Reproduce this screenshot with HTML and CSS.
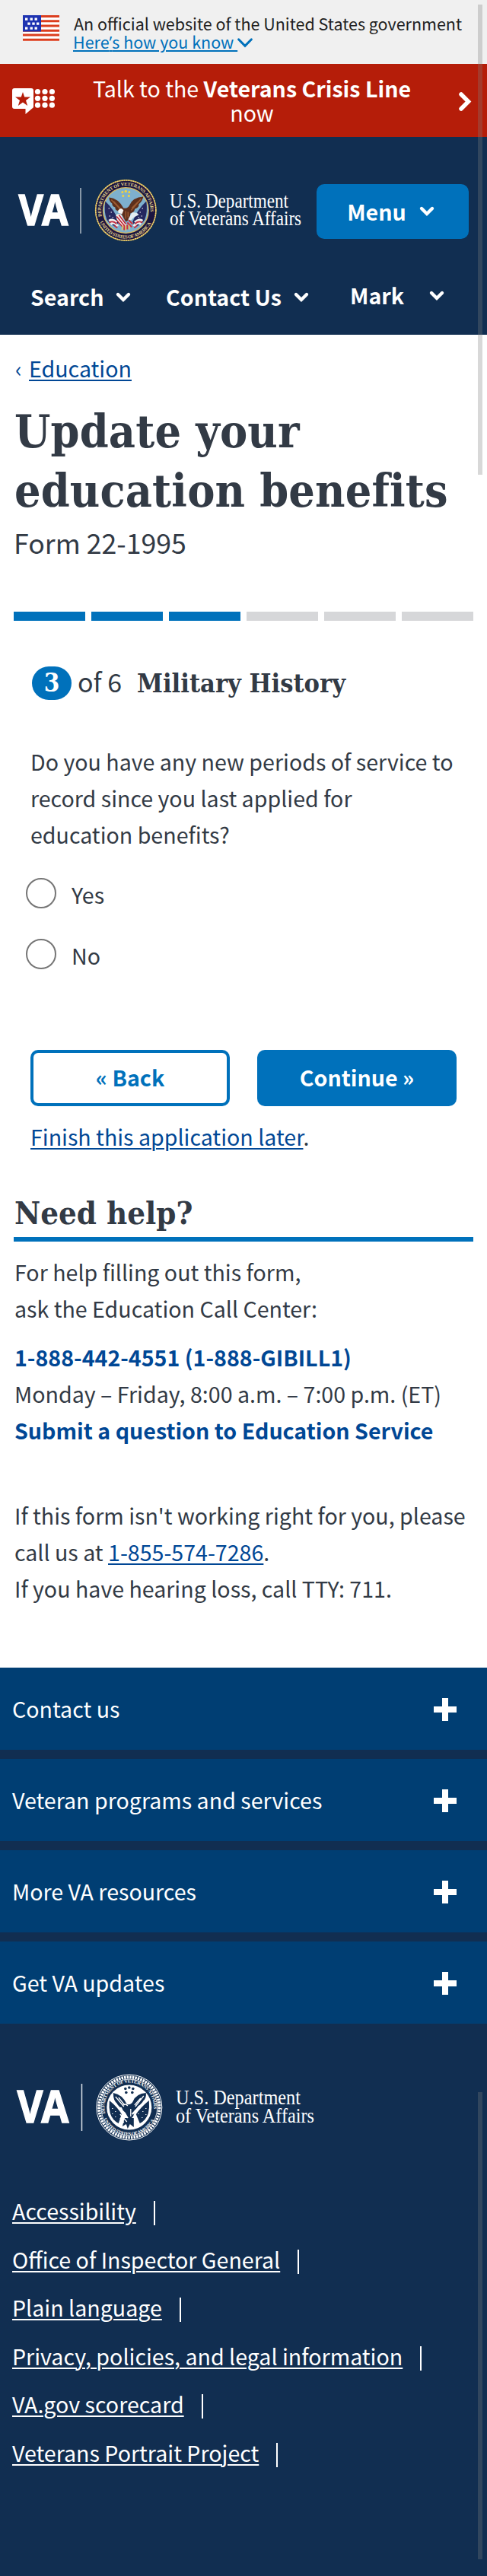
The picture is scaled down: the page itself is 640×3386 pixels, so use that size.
FILE: index.html
```
<!DOCTYPE html>
<html lang="en">
<head>
<meta charset="utf-8">
<title>Update your education benefits | VA.gov</title>
<link rel="stylesheet" href="styles.css">
</head>
<body>
<div class="gov-banner">
  <svg class="flag" viewBox="0 0 48 34" width="48" height="34">
    <rect width="48" height="34" fill="#fff"/>
    <path d="M0 1.5H48M0 7.7H48M0 14H48M0 20.2H48M0 26H48M0 32.3H48" stroke="#db3e1f" stroke-width="3"/>
    <rect width="24" height="21.5" fill="#1e33b1"/>
    <path d="M3 5.2h3.4M9.500 5.2h3.4M15.500 5.2h3.4M6.300 11.2h3.4M12.300 11.2h3.4M18 11.2h3.4M3 17.2h3.4M9.500 17.2h3.4M15.500 17.2h3.4" stroke="#fff" stroke-width="3.2"/>
  </svg>
  <div class="gov-text">
    <div class="gov-line">An official website of the United States government</div>
    <a class="gov-link">Here<span class="apos">’</span>s how you know </a><svg class="gov-chevron" viewBox="0 0 20 13" width="20" height="13"><path d="M1.6 1.8 10 10.4l8.400-8.600" fill="none" stroke="#0071bb" stroke-width="3" stroke-linecap="round"/></svg>
  </div>
</div>
<div class="crisis">
  <svg class="crisis-icon" viewBox="0 0 56 36" width="56" height="36">
    <path d="M3 0H25a3 3 0 0 1 3 3V24a3 3 0 0 1-2 2.700L17.500 34V27H3a3 3 0 0 1-3-3V3a3 3 0 0 1 3-3z" fill="#fff"/>
    <path d="M14 5l2.200 6.400H24l-6 4.500 2.200 7-6.200-4.300-6.200 4.300 2.200-7-6-4.500h7.800z" fill="#b51d09"/>
    <g fill="#fff"><circle cx="33.500" cy="4.500" r="3.600"/><circle cx="43" cy="4.500" r="3.600"/><circle cx="52.400" cy="4.500" r="3.600"/><circle cx="33.500" cy="13.300" r="3.600"/><circle cx="43" cy="13.300" r="3.600"/><circle cx="52.400" cy="13.300" r="3.600"/><circle cx="33.500" cy="22.200" r="3.600"/><circle cx="43" cy="22.200" r="3.600"/><circle cx="52.400" cy="22.200" r="3.600"/></g>
  </svg>
  <div class="crisis-text">Talk to the <b>Veterans Crisis Line</b><br>now</div>
  <svg class="crisis-arrow" viewBox="0 0 18 27" width="18" height="27"><path d="M4 4l9.500 9.500L4 23" fill="none" stroke="#fff" stroke-width="5.500" stroke-linecap="round"/></svg>
</div>
<header class="header">
  <div class="brand-row">
    <svg class="logo" viewBox="0 227 404 100" width="404" height="100">
      <defs>
        <path id="arcTop" d="M-31.500 8A32.500 32.500 0 1 1 31.500 8"/>
        <path id="arcBottom" d="M-35 12.500A37.200 37.200 0 0 0 35 12.500"/>
        <path id="flagpanel" d="M-27-12Q-15-1-9 15L-12 22Q-22 18-25 12Q-29 2-27-12z"/>
      </defs>
      <text class="va" x="24.500" y="295.700" textLength="65" lengthAdjust="spacingAndGlyphs">VA</text>
      <path d="M106 247V307" stroke="#8797a8" stroke-width="2"/>
      <g transform="translate(165.300 276.500)">
        <circle r="40.500" fill="#b89a4b"/>
        <circle r="39" fill="#1b1540"/>
        <circle r="39.500" fill="none" stroke="#f0d676" stroke-width="1.500" stroke-dasharray="2 1"/>
        <circle r="29.800" fill="#7eb0ce" stroke="#d9bc62" stroke-width="1.300"/>
        <text class="seal-text gold"><textPath href="#arcTop" textLength="112">DEPARTMENT OF VETERANS AFFAIRS</textPath></text>
        <text class="seal-text gold"><textPath href="#arcBottom" startOffset="3" textLength="83">UNITED STATES OF AMERICA</textPath></text>
        <g fill="#f2d33f"><circle cx="0" cy="-25" r="1.700"/><circle cx="-4.500" cy="-24" r="1.500"/><circle cx="4.500" cy="-24" r="1.500"/><circle cx="-3.500" cy="-19" r="1.500"/><circle cx="4" cy="-19" r="1.500"/></g>
        <use href="#flagpanel" fill="#25285f"/>
        <use href="#flagpanel" fill="#25285f" transform="scale(-1 1)"/>
        <path d="M-22-3v1M-19 2v1M-21 7v1M-17 9v1M22-3v1M19 2v1M21 7v1M17 9v1" stroke="#fff" stroke-width="1.500"/>
        <path d="M-22 14q5-3 10 2M-20 18q6-4 9 3M22 14q-5-3-10 2M20 18q-6-4-9 3" fill="none" stroke="#eee" stroke-width="3.500"/>
        <path d="M-22 16q6-3 10 2M22 16q-6-3-10 2M-15 20l4 3M15 20l-4 3" fill="none" stroke="#c32d40" stroke-width="1.800"/>
        <path d="M-22-17Q-10-16-3-3Q3-2 5-7Q9-17 23-18Q22-12 17-8Q18-4 12-2Q11 3 6 4Q6 13 0 15L-5 6Q-7 5-8 1Q-14 1-14-4Q-18-5-18-9Q-22-12-22-17z" fill="#5d2f1c"/>
        <path d="M-19-14L-6 0M-16-12L-7-2M20-15L7 0M16-11L8-3M0 1v10M3 2v7" stroke="#9a5a31" stroke-width="1.500"/>
        <path d="M-10 0q4-5 7 0l-2 5-5-2z" fill="#f5f5f2"/>
        <path d="M-13 6Q-6 2-4 10L1 19L-3 23Q-12 17-13 6z" fill="#f3eee8"/>
        <path d="M-12 8L-2 20M-9 6L0 18M-12 13L-4 22" stroke="#bd2035" stroke-width="1.500"/>
        <path d="M8 3Q15 2 17 6Q11 8 7 13L3 12z" fill="#e4edf1"/>
        <path d="M4 13l5 5M2 16l6 6M-2 19v7M2 19v6" stroke="#cc3040" stroke-width="2"/>
        <path d="M-4 20l-1 6M0 20v7M4 19l1 6" stroke="#e9c857" stroke-width="1.500"/>
      </g>
      <text class="dept" x="223" y="272.500" textLength="156" lengthAdjust="spacingAndGlyphs">U.S. Department</text>
      <text class="dept" x="223" y="296" textLength="173" lengthAdjust="spacingAndGlyphs">of Veterans Affairs</text>
    </svg>
    <button class="menu-btn">Menu <svg viewBox="0 0 20 13" width="20" height="13"><path d="M3 3l7 7 7-7" class="chev"/></svg></button>
  </div>
  <nav class="nav">
    <div class="nav-item">Search<svg viewBox="0 0 20 13" width="20" height="13"><path d="M3 3l7 7 7-7" class="chev"/></svg></div>
    <div class="nav-item">Contact Us<svg viewBox="0 0 20 13" width="20" height="13"><path d="M3 3l7 7 7-7" class="chev"/></svg></div>
    <div class="nav-item nav-user">Mark<svg viewBox="0 0 20 13" width="20" height="13"><path d="M3 3l7 7 7-7" class="chev"/></svg></div>
  </nav>
</header>
<main class="main">
  <div class="crumb"><span class="crumb-arrow">‹</span><a class="link">Education</a></div>
  <h1>Update your<br>education benefits</h1>
  <div class="form-no">Form 22-1995</div>
  <div class="progress"><i class="done"></i><i class="done"></i><i class="done"></i><i></i><i></i><i></i></div>
  <section class="form">
    <div class="step"><span class="step-num">3</span><span class="step-of">of 6</span><span class="step-title">Military History</span></div>
    <p class="question">Do you have any new periods of service to<br>record since you last applied for<br>education benefits?</p>
    <label class="option"><span class="radio"></span>Yes</label>
    <label class="option"><span class="radio"></span>No</label>
    <div class="buttons"><button class="btn btn-back">« Back</button><button class="btn btn-next">Continue »</button></div>
    <p class="later"><a class="link">Finish this application later</a>.</p>
  </section>
  <h2>Need help?</h2>
  <div class="help">
    <p>For help filling out this form,<br>ask the Education Call Center:</p>
    <p class="help-contact"><b>1-888-442-4551 (1-888-GIBILL1)</b><br>Monday – Friday, 8:00 a.m. – 7:00 p.m. (ET)<br><b>Submit a question to Education Service</b></p>
    <p class="help-tech">If this form isn't working right for you, please<br>call us at <a class="link">1-855-574-7286</a>.<br>If you have hearing loss, call TTY: 711.</p>
  </div>
</main>
<footer class="footer">
  <div class="accordion">
    <div class="acc-item">Contact us<svg viewBox="0 0 30 30" width="30" height="30"><path d="M15 0V30M0 15H30" class="plus"/></svg></div>
    <div class="acc-item">Veteran programs and services<svg viewBox="0 0 30 30" width="30" height="30"><path d="M15 0V30M0 15H30" class="plus"/></svg></div>
    <div class="acc-item">More VA resources<svg viewBox="0 0 30 30" width="30" height="30"><path d="M15 0V30M0 15H30" class="plus"/></svg></div>
    <div class="acc-item">Get VA updates<svg viewBox="0 0 30 30" width="30" height="30"><path d="M15 0V30M0 15H30" class="plus"/></svg></div>
  </div>
  <svg class="footer-logo" viewBox="0 2720 440 100" width="440" height="100">
    <text class="va va-lg" x="22.500" y="2790" textLength="68" lengthAdjust="spacingAndGlyphs">VA</text>
    <path d="M107.500 2739V2801" stroke="#dfe4ea" stroke-width="1.500"/>
    <g transform="translate(169.800 2770)">
      <circle r="43" fill="#112e51" stroke="#fff" stroke-width="1"/>
      <circle r="39.700" fill="none" stroke="#fff" stroke-width="3.800" stroke-dasharray="2.500 1.100"/>
      <circle r="37" fill="none" stroke="#fff" stroke-width=".8"/>
      <circle r="29.500" fill="#fff"/>
      <text class="seal-text light"><textPath href="#arcTop" textLength="112">DEPARTMENT OF VETERANS AFFAIRS</textPath></text>
      <text class="seal-text light"><textPath href="#arcBottom" startOffset="3" textLength="83">UNITED STATES OF AMERICA</textPath></text>
      <g fill="#112e51">
        <circle cx="0" cy="-26" r="1.800"/><circle cx="-5" cy="-24.500" r="1.800"/><circle cx="5" cy="-24.500" r="1.800"/><circle cx="-4" cy="-19.500" r="1.800"/><circle cx="4" cy="-19.500" r="1.800"/>
        <path d="M-21-19Q-9-17-3-4Q3-3 5-8Q9-18 22-19Q23-12 18-8Q18-4 12-2Q10 2 7 4Q7 13 0 16L-5 7Q-9 4-10 0Q-16 0-16-5Q-21-9-21-19z"/>
        <path d="M-26-9Q-15 0-10 9L-14 21Q-22 17-25 8Q-27 0-26-9z"/>
        <path d="M26-9Q15 0 9 9L14 21Q22 17 25 8Q27 0 26-9z"/>
        <path d="M-6 14L-9 25L-4 22L-2 28L1 22L6 26L6 14z"/>
      </g>
      <path d="M-18-14L-7-1M-14-13L-6-3M19-15L8-1M15-12L7-3M-9-2q4-4 7 0M-22 1v1M-18 5v1M-22 8v1M-18 12v1M22 1v1M18 5v1M22 9v1M17 13v1M12 8v1M-12 9L-3 19M-10 5L-2 14M-12 14L-7 20M2 2v10" stroke="#fff" stroke-width="1.300" fill="none"/>
      <path d="M-25-13L-12 2M25-13L4 9" stroke="#fff" stroke-width="2.500"/>
    </g>
    <text class="dept dept-lg" x="231" y="2766" textLength="164" lengthAdjust="spacingAndGlyphs">U.S. Department</text>
    <text class="dept dept-lg" x="231" y="2790" textLength="182" lengthAdjust="spacingAndGlyphs">of Veterans Affairs</text>
  </svg>
  <ul class="links">
    <li><a>Accessibility</a></li>
    <li><a>Office of Inspector General</a></li>
    <li><a>Plain language</a></li>
    <li><a>Privacy, policies, and legal information</a></li>
    <li><a>VA.gov scorecard</a></li>
    <li><a>Veterans Portrait Project</a></li>
  </ul>
</footer>
<div class="scroll scroll-top"></div>
<div class="scroll scroll-bottom"></div>
</body>
</html>
```
FILE: styles.css
```
* { box-sizing: border-box; }
body {
  position: relative;
  margin: 0;
  width: 640px;
  height: 3386px;
  overflow: hidden;
  background: #fff;
  color: #323a45;
  font: 28.6px/48px "Noto Sans CJK SC", "Noto Sans", sans-serif;
  white-space: nowrap;
}
p, h1, h2, ul { margin: 0; padding: 0; }
svg { display: block; flex: none; overflow: visible; }
button { font: inherit; border: 0; margin: 0; padding: 0; }
.link { color: #004795; text-decoration: underline 2px; text-underline-offset: 3px; }

.gov-banner { display: flex; height: 84px; padding: 19px 0 0 30px; background: #f0f0f0; color: #212121; font-size: 21.5px; line-height: 24px; }
.flag { margin-top: .5px; }
.gov-text { padding-left: 18px; }
.gov-line { padding-left: 1px; }
.gov-link { color: #0071bb; text-decoration: underline 2px; text-underline-offset: 2px; white-space: pre; }
.apos { font-family: "Open Sans", sans-serif; }
.gov-chevron { display: inline-block; vertical-align: 1px; }

.crisis { display: flex; height: 96px; padding: 0 20px 0 16px; background: #b51d09; color: #fff; line-height: 32px; }
.crisis-icon { margin-top: 32px; }
.crisis-text { flex: 1; padding: 16px 12px 0 0; text-align: center; }
.crisis-arrow { margin-top: 36px; }

.header { height: 260px; padding-top: 47px; background: #112e51; color: #fff; font-weight: 700; }
.brand-row { display: flex; }
.logo { margin-right: 12px; }
.va { font: 700 55px "Noto Sans", sans-serif; fill: #fff; stroke: #fff; stroke-width: 1.4; }
.va-lg { font-size: 59px; }
.dept { font: 400 27px "Liberation Serif", serif; fill: #fff; }
.dept-lg { font-size: 28px; }
.seal-text { font: 700 6.3px "Liberation Serif", serif; }
.gold { fill: #e6d68c; }
.light { fill: #fff; }
.menu-btn { display: flex; align-items: center; justify-content: center; gap: 17px; width: 200px; height: 72px; margin-top: 15px; padding: 0 5px 1px 0; border-radius: 10px; background: #0071bb; color: #fff; font-weight: 700; }
.chev { fill: none; stroke: #fff; stroke-width: 4.4; stroke-linecap: round; }
.nav { display: grid; grid-template-columns: 178px 242px 1fr; margin-top: 43px; padding-left: 40px; line-height: 40px; }
.nav-item { display: flex; gap: 16px; }
.nav-item svg { margin-top: 14px; }
.nav-user { gap: 33px; margin-top: -2px; }

.main { padding: 19.5px 18px 80px; }
.crumb { display: flex; color: #004795; }
.crumb-arrow { width: 20px; padding-left: 2px; }
h1 { margin-top: 20px; padding-left: 1px; font: 700 60.4px/78px "DejaVu Serif Condensed", "DejaVu Serif", serif; letter-spacing: .15px; }
.form-no { margin-top: 5.5px; font-size: 35.7px; }
.progress { display: grid; grid-template-columns: repeat(6, 1fr); gap: 8px; margin-top: 67px; }
.progress i { height: 12px; background: #d6d7d9; }
.progress .done { background: #0071bb; }
.form { padding: 0 22px; }
.step { display: flex; height: 44px; margin-top: 60px; padding-left: 2px; }
.step-num { width: 52px; height: 44px; border-radius: 22px; background: #0071bb; color: #fff; text-align: center; font: 700 33px/44px "DejaVu Serif Condensed", "DejaVu Serif", serif; }
.step-of { width: 86px; padding-left: 8px; font-size: 34px; line-height: 39px; }
.step-title { font: 700 34.1px/44px "DejaVu Serif Condensed", "DejaVu Serif", serif; }
.question { margin-top: 56.5px; }
.option { display: flex; height: 48px; margin: 31.5px 0 0 -6px; gap: 20px; }
.option + .option { margin-top: 32px; }
.radio { width: 40px; height: 40px; margin-top: 2px; border: 2px solid #767676; border-radius: 50%; }
.buttons { display: flex; gap: 36px; margin-top: 100px; }
.btn { width: 262px; height: 74px; padding-bottom: 3px; border-radius: 10px; font-weight: 700; }
.btn-back { border: 4px solid #0071bb; background: #fff; color: #0071bb; }
.btn-next { background: #0071bb; color: #fff; }
.later { margin-top: 16px; }
h2 { margin-top: 51px; padding: 0 0 5px 1px; border-bottom: 6px solid #0071bb; font: 700 41.6px/52px "DejaVu Serif Condensed", "DejaVu Serif", serif; }
.help { padding: 16px 0 0 1px; }
.help-contact { margin-top: 16px; }
.help-contact b { color: #004795; }
.help-tech { margin-top: 64px; }

.footer { height: 1194px; background: #112e51; color: #fff; }
.accordion { display: grid; gap: 12px; }
.acc-item { display: flex; justify-content: space-between; align-items: center; height: 108px; padding: 0 40px 0 16px; background: #003e73; }
.acc-item svg { margin-top: 2px; }
.plus { stroke: #fff; stroke-width: 8; }
.footer-logo { margin-top: 60px; }
.links { display: grid; gap: 15.5px; margin-top: 62px; padding-left: 16px; list-style: none; }
.links li { display: flex; height: 48px; }
.links a { text-decoration: underline 2px; text-underline-offset: 3px; }
.links li::after { content: ""; width: 2px; height: 32px; margin: 11px 0 0 23px; background: #fff; }

.scroll { position: absolute; left: 628px; width: 6px; background: rgba(125, 125, 125, .3); }
.scroll-top { top: 6px; height: 618px; }
.scroll-bottom { top: 2750px; height: 614px; }
```
